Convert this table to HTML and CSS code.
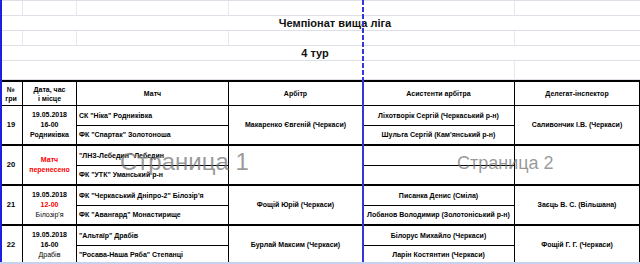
FILE: index.html
```html
<!DOCTYPE html>
<html lang="uk">
<head>
<meta charset="utf-8">
<link rel="stylesheet" href="styles.css">
</head>
<body>
<div class="sheet">
  <div class="top">
    <div class="g c1"></div><div class="g c1"></div><div class="g c1"></div><div class="g span2"></div><div class="g last"></div>
    <div class="g full title title1">Чемпіонат вища ліга</div>
    <div class="g c1"></div><div class="g c1"></div><div class="g c1"></div><div class="g span2"></div><div class="g last"></div>
    <div class="g full title title2">4 тур</div>
    <div class="g span5"></div><div class="g last"></div>
  </div>
  <div class="table">
    <div class="cell head"><div>№<br>гри</div></div>
    <div class="cell head"><div>Дата, час<br>і місце</div></div>
    <div class="cell head">Матч</div>
    <div class="cell head">Арбітр</div>
    <div class="cell head">Асистенти арбітра</div>
    <div class="cell head">Делегат-інспектор</div>

    <div class="cell grp num">19</div>
    <div class="cell grp multi"><div>19.05.2018<br>16-00<br>Родниківка</div></div>
    <div class="cell left">СК "Ніка" Родниківка</div>
    <div class="cell grp">Макаренко Євгеній (Черкаси)</div>
    <div class="cell">Ліхотворік Сергій (Черкаський р-н)</div>
    <div class="cell grp">Саливончик І.В. (Черкаси)</div>
    <div class="cell left end">ФК "Спартак" Золотоноша</div>
    <div class="cell end">Шульга Сергій (Кам'янський р-н)</div>

    <div class="cell grp num">20</div>
    <div class="cell grp multi red"><div>Матч<br>перенесено</div></div>
    <div class="cell left">"ЛНЗ-Лебедин" Лебедин</div>
    <div class="cell grp"></div>
    <div class="cell"></div>
    <div class="cell grp"></div>
    <div class="cell left end">ФК "УТК" Уманський р-н</div>
    <div class="cell end"></div>

    <div class="cell grp num">21</div>
    <div class="cell grp multi"><div>19.05.2018<br><span class="red">12-00</span><br><span class="light">Білозір'я</span></div></div>
    <div class="cell left">ФК "Черкаський Дніпро-2" Білозір'я</div>
    <div class="cell grp">Фощій Юрій (Черкаси)</div>
    <div class="cell">Писанка Денис (Сміла)</div>
    <div class="cell grp">Заєць В. С. (Вільшана)</div>
    <div class="cell left end">ФК "Авангард" Монастирище</div>
    <div class="cell end">Лобанов Володимир (Золотоніський р-н)</div>

    <div class="cell grp num">22</div>
    <div class="cell grp multi"><div>19.05.2018<br>16-00<br><span class="light">Драбів</span></div></div>
    <div class="cell left">"Альтаїр" Драбів</div>
    <div class="cell grp">Бурлай Максим (Черкаси)</div>
    <div class="cell">Білорус Михайло (Черкаси)</div>
    <div class="cell grp">Фощій Г. Г. (Черкаси)</div>
    <div class="cell left end">"Росава-Наша Ряба" Степанці</div>
    <div class="cell end">Ларін Костянтин (Черкаси)</div>
  </div>

  <div class="pb-left"></div>
  <div class="pb-dash"></div>
  <div class="pb-solid"></div>
  <div class="pb-bottom"></div>
  <div class="wm wm1">Страница 1</div>
  <div class="wm wm2">Страница 2</div>
</div>
</body>
</html>
```

FILE: styles.css
```css
html, body {
  margin: 0;
  padding: 0;
  background: #fff;
}
body {
  width: 640px;
  height: 264px;
  overflow: hidden;
  font-family: "Liberation Sans", Arial, sans-serif;
  color: #000;
}
.sheet {
  position: relative;
  width: 640px;
  height: 264px;
  overflow: hidden;
}
.top {
  display: grid;
  grid-template-columns: 23px 54px 152px 134px 152px 125px;
  grid-template-rows: 15px 15px 15px 15px 19px;
  border-top: 1px solid #dde0e7;
  box-sizing: border-box;
  height: 80px;
}
.g {
  box-sizing: border-box;
  border-bottom: 1px solid #dde0e7;
}
.c1 { border-right: 1px solid #e6e8ee; }
.span2 { grid-column: span 2; border-right: 1px solid #e6e8ee; }
.span5 { grid-column: span 5; border-right: 1px solid #e6e8ee; }
.full { grid-column: span 6; }
.title {
  display: flex;
  align-items: center;
  justify-content: center;
  font-weight: bold;
  font-size: 11px;
  color: #111;
}
.title1 { padding-left: 30px; }
.title2 { padding-right: 10px; }

.table {
  display: grid;
  grid-template-columns: 23px 54px 152px 134px 152px 125px;
  grid-template-rows: 24px repeat(8, 20px);
  border-top: 2px solid #000;
}
.cell {
  box-sizing: border-box;
  border-right: 1px solid #000;
  border-bottom: 1px solid #000;
  display: flex;
  align-items: center;
  justify-content: center;
  text-align: center;
  font-weight: bold;
  font-size: 7px;
  line-height: 9.5px;
  white-space: nowrap;
  overflow: hidden;
}
.head {
  line-height: 9px;
}
.num { font-size: 7.5px; }
.grp {
  grid-row: span 2;
  border-bottom: 2px solid #000;
}
.end { border-bottom: 2px solid #000; }
.left {
  justify-content: flex-start;
  text-align: left;
  padding-left: 2px;
}
.multi { line-height: 9.8px; }
.red { color: #ff0000; }
.light { font-weight: normal; }

.pb-left {
  position: absolute;
  left: 0;
  top: 0;
  width: 2px;
  height: 264px;
  background: #1f1fe0;
}
.pb-dash {
  position: absolute;
  left: 362px;
  top: 0;
  width: 2px;
  height: 80px;
  background: repeating-linear-gradient(to bottom, #3535d8 0 5px, transparent 5px 7px);
}
.pb-solid {
  position: absolute;
  left: 362px;
  top: 80px;
  width: 2px;
  height: 184px;
  background: #3535d8;
}
.pb-bottom {
  position: absolute;
  left: 0;
  top: 262px;
  width: 640px;
  height: 2px;
  background: #c6d2ee;
}
.wm {
  position: absolute;
  font-family: "Liberation Sans", Arial, sans-serif;
  color: rgba(120, 120, 120, 0.75);
  white-space: nowrap;
  line-height: 1;
}
.wm1 {
  left: 120px;
  top: 150px;
  font-size: 24px;
}
.wm2 {
  left: 457px;
  top: 154px;
  font-size: 18px;
}
```
